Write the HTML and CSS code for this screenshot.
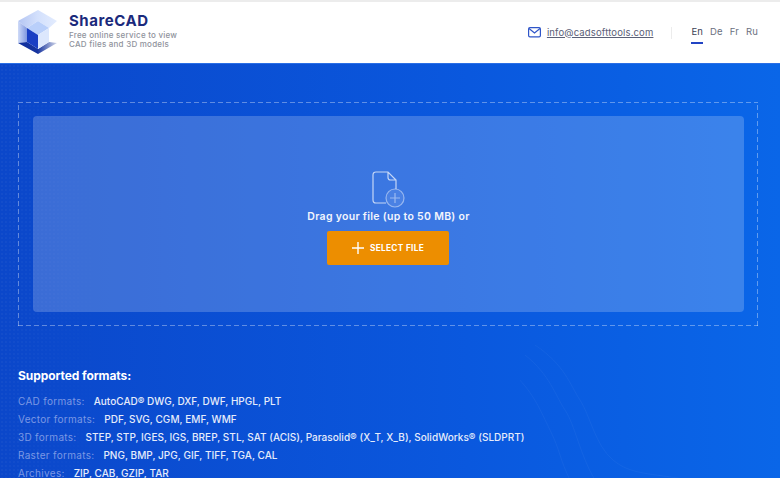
FILE: index.html
```html
<!DOCTYPE html>
<html lang="en">
  <head>
    <meta charset="utf-8" />
    <meta name="viewport" content="width=device-width, initial-scale=1.0" />
    <title>ShareCAD</title>
    <link rel="stylesheet" href="styles.css">
  </head>

  <body>
    <header class="top">
      <a class="brand" href="#">
        <svg class="logo" width="39" height="45" viewBox="0 0 39 45">
          <defs>
            <linearGradient id="lgTop" x1="0" y1="0" x2="1" y2="0">
              <stop offset="0" stop-color="#b4c5f2" />
              <stop offset="0.5" stop-color="#d3e0fc" />
              <stop offset="1" stop-color="#e3ecfe" />
            </linearGradient>
            <linearGradient id="lgLeft" x1="0" y1="0" x2="1" y2="0">
              <stop offset="0" stop-color="#cfdbf8" />
              <stop offset="1" stop-color="#7f97e0" />
            </linearGradient>
            <linearGradient id="lgBottom" x1="0" y1="0" x2="1" y2="0">
              <stop offset="0" stop-color="#10309f" />
              <stop offset="0.5" stop-color="#16349f" />
              <stop offset="1" stop-color="#d3d8ea" />
            </linearGradient>
          </defs>
          <path d="M20 0 39 11 31 18 20 11 9 18 0 11Z" fill="url(#lgTop)" />
          <path d="M0 11 9 18V32L0 33Z" fill="url(#lgLeft)" />
          <path d="M0 33 9 32 20 39 31 32 39 33 20 44Z" fill="url(#lgBottom)" />
          <path d="M9 18 20 11 31 18 20 25Z" fill="#b9cffa" />
          <path d="M9 18 20 25V39L9 32Z" fill="#1a3fc4" />
          <path d="M20 25 31 18V32L20 39Z" fill="#dce7fd" />
        </svg>
        <span class="brand-text">
          <span class="brand-name">ShareCAD</span>
          <span class="brand-sub">Free online service to view<br>CAD files and 3D models</span>
        </span>
      </a>

      <div class="top-right">
        <a class="mail" href="#">
          <svg width="13" height="11" viewBox="0 0 13 11" fill="none" stroke="#2f55c8" stroke-width="1.200">
            <rect x="0.600" y="0.600" width="11.800" height="9.300" rx="1.300" />
            <path d="M1 1.500 6.500 6 12 1.500" />
          </svg>
          <span class="mail-text">info@cadsofttools.com</span>
        </a>
        <nav class="langs">
          <a class="lang chosen" href="#">En</a>
          <a class="lang" href="#">De</a>
          <a class="lang" href="#">Fr</a>
          <a class="lang" href="#">Ru</a>
        </nav>
      </div>
    </header>

    <main class="hero">
      <svg class="waves" width="200" height="135" viewBox="0 0 200 135" fill="none" stroke="#ffffff" stroke-opacity="0.040">
        <path d="M15 0C45 20 50 40 60 55S75 100 93 115 130 128 170 135" />
        <path d="M5 10C30 30 35 50 45 65S60 110 75 135" />
        <path d="M-5 30C15 50 20 65 30 85S40 115 50 135" />
      </svg>

      <section class="drop-outer">
        <div class="drop-inner">
          <svg class="file-icon" width="33" height="37" viewBox="0 0 33 37" fill="none" stroke="#ffffff" stroke-width="1.200">
            <path stroke-opacity="0.700" d="M4 1H16L24 9V18M16 1V6.500Q16 9 18.500 9H24M14 32H4Q1 32 1 29V4Q1 1 4 1" />
            <circle stroke-opacity="0.450" fill="#ffffff" fill-opacity="0.080" cx="23" cy="27" r="9" />
            <path stroke-opacity="0.450" d="M23 22V32M18 27H28" />
          </svg>
          <p class="drag">Drag your file (up to 50 MB) or</p>
          <button class="select-btn">
            <svg width="12" height="12" viewBox="0 0 12 12" stroke="#ffffff" stroke-width="1.400">
              <path d="M6 0V12M0 6H12" />
            </svg>
            SELECT FILE
          </button>
        </div>
      </section>

      <section class="formats">
        <h2 class="formats-title">Supported formats:</h2>
        <p class="format"><span class="format-label">CAD formats:</span>AutoCAD® DWG, DXF, DWF, HPGL, PLT</p>
        <p class="format"><span class="format-label">Vector formats:</span>PDF, SVG, CGM, EMF, WMF</p>
        <p class="format"><span class="format-label">3D formats:</span>STEP, STP, IGES, IGS, BREP, STL, SAT (ACIS), Parasolid® (X_T, X_B), SolidWorks® (SLDPRT)</p>
        <p class="format"><span class="format-label">Raster formats:</span>PNG, BMP, JPG, GIF, TIFF, TGA, CAL</p>
        <p class="format"><span class="format-label">Archives:</span>ZIP, CAB, GZIP, TAR</p>
      </section>
    </main>
  </body>
</html>
```

FILE: styles.css
```css
html,
body {
  margin: 0;
  height: 100%;
  overflow: hidden;
}

body {
  font-family: "Inter", "Open Sans", sans-serif;
  background-color: #0a55de;
}

a {
  text-decoration: none;
}

.top {
  box-sizing: border-box;
  height: 63px;
  padding: 0 22px 0 18px;
  background-color: white;
  border-top: 2px solid #ececec;
  display: flex;
  align-items: center;
  justify-content: space-between;
}

.brand {
  display: flex;
  align-items: center;
  gap: 12px;
}

.logo {
  flex: none;
}

.brand-text {
  display: flex;
  flex-direction: column;
  margin-top: -5px;
}

.brand-name {
  font-size: 15px;
  line-height: 20px;
  font-weight: 700;
  letter-spacing: 0.55px;
  color: #1b2a7c;
}

.brand-sub {
  font-size: 8px;
  line-height: 9.500px;
  font-weight: 500;
  letter-spacing: 0.23px;
  color: #8f939c;
}

.top-right {
  display: flex;
  align-items: center;
}

.mail {
  display: flex;
  align-items: center;
  gap: 6px;
  padding-right: 18px;
  margin-right: 19px;
  border-right: 1px solid #ececec;
}

.mail-text {
  font-size: 9.500px;
  line-height: 12px;
  letter-spacing: 0.15px;
  color: #5a6077;
  text-decoration: underline;
}

.langs {
  display: flex;
  gap: 7px;
}

.lang {
  font-size: 9.500px;
  line-height: 12px;
  padding-bottom: 4px;
  letter-spacing: 0.15px;
  color: #6b7080;
  border-bottom: 2px solid transparent;
  margin-top: 4px;
}

.lang.chosen {
  color: #3d4256;
  border-bottom-color: #2244c4;
}

.hero {
  position: relative;
  height: 415px;
  box-sizing: border-box;
  padding: 38px 22px 0 18px;
  background: linear-gradient(90deg, #0b47ca 0%, #0a58de 60%, #0a66e8 100%);
  border-top: 1px solid #2a6fe6;
}

/* dotted texture on the left side */
.hero::before {
  content: "";
  position: absolute;
  top: 0;
  bottom: 0;
  left: 0;
  width: 110px;
  background-image: radial-gradient(rgba(255, 255, 255, 0.035) 1px, transparent 1px);
  background-size: 4px 4px;
  -webkit-mask-image: linear-gradient(90deg, black, transparent);
  mask-image: linear-gradient(90deg, black, transparent);
}

.waves {
  position: absolute;
  left: 520px;
  top: 281px;
}

.drop-outer {
  position: relative;
  box-sizing: border-box;
  height: 224px;
  padding: 14px 14px 14px 15px;
  background-image:
    repeating-linear-gradient(90deg, rgba(255, 255, 255, 0.35) 0 5px, transparent 5px 8px),
    repeating-linear-gradient(90deg, rgba(255, 255, 255, 0.35) 0 5px, transparent 5px 8px),
    repeating-linear-gradient(0deg, rgba(255, 255, 255, 0.35) 0 5px, transparent 5px 8px),
    repeating-linear-gradient(0deg, rgba(255, 255, 255, 0.35) 0 5px, transparent 5px 8px);
  background-size: 100% 1px, 100% 1px, 1px 100%, 1px 100%;
  background-position: top left, bottom left, top left, top right;
  background-repeat: no-repeat;
}

.drop-inner {
  box-sizing: border-box;
  height: 196px;
  padding-top: 55px;
  border-radius: 4px;
  background-color: rgba(255, 255, 255, 0.2);
  display: flex;
  flex-direction: column;
  align-items: center;
}

.drag {
  margin: 2px 0 0;
  font-size: 10.500px;
  line-height: 14px;
  font-weight: 600;
  letter-spacing: 0.3px;
  color: #f2f5fd;
}

.select-btn {
  margin: 7px 1px 0 0;
  width: 122px;
  height: 34px;
  border: none;
  border-radius: 2px;
  background-color: #ed8e00;
  color: white;
  font-family: inherit;
  font-size: 8.300px;
  font-weight: 700;
  letter-spacing: 0.3px;
  display: flex;
  align-items: center;
  justify-content: center;
  gap: 6px;
}

.formats {
  position: relative;
  margin-top: 42px;
}

.formats-title {
  margin: 0 0 7.500px;
  font-size: 12px;
  line-height: 16px;
  font-weight: 700;
  letter-spacing: -0.08px;
  color: white;
}

.format {
  margin: 0;
  font-size: 10px;
  line-height: 18px;
  font-weight: 500;
  letter-spacing: 0.03px;
  white-space: nowrap;
  color: #e6ecfb;
}

.format-label {
  margin-right: 9px;
  font-weight: 400;
  letter-spacing: 0.3px;
  color: #7b98e4;
}
```
